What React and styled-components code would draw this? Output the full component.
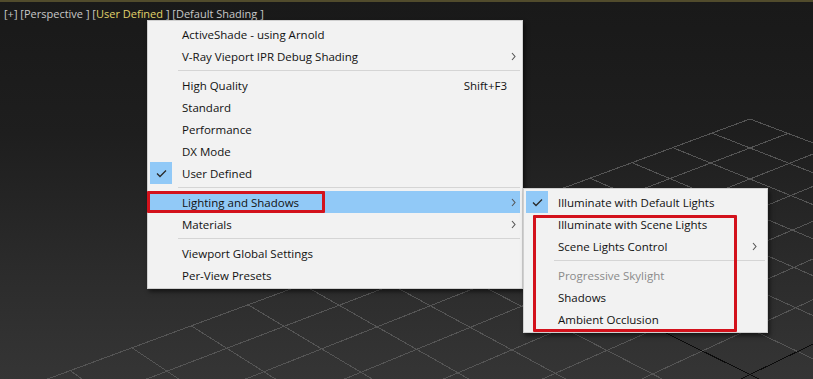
import React from 'react';
import styled, { createGlobalStyle } from 'styled-components';

const GlobalStyle = createGlobalStyle`
  html, body {
    margin: 0;
    padding: 0;
    background: #1a1a1a;
  }
  body {
    font-family: "Open Sans", "Noto Sans", sans-serif;
  }
`;

// perspective of the home grid: two vanishing points and the far corner
const VA = [3022, -724];
const VB = [-1469, -724];
const P0 = [750, 117];
const AL = -0.01645;
const BE = -0.01684;
const N = 30;
const W_MIN = 0.5;
const VIEW_W = 813;
const VIEW_H = 377;

function project(u, v) {
  const a = AL * u;
  const b = BE * v;
  const w = 1 + a + b;
  return [(VA[0] * a + VB[0] * b + P0[0]) / w, (VA[1] * a + VB[1] * b + P0[1]) / w];
}

// keep each line inside the view so it never carries far-off points
function clip(p, q) {
  const dx = q[0] - p[0];
  const dy = q[1] - p[1];
  let t0 = 0;
  let t1 = 1;
  const checks = [
    [-dx, p[0]],
    [dx, VIEW_W - p[0]],
    [-dy, p[1]],
    [dy, VIEW_H - p[1]],
  ];
  for (const [pk, qk] of checks) {
    if (pk === 0) {
      if (qk < 0) return null;
    } else {
      const r = qk / pk;
      if (pk < 0) {
        if (r > t1) return null;
        if (r > t0) t0 = r;
      } else {
        if (r < t0) return null;
        if (r < t1) t1 = r;
      }
    }
  }
  return [p[0] + t0 * dx, p[1] + t0 * dy, p[0] + t1 * dx, p[1] + t1 * dy].map(n => Math.round(n * 10) / 10);
}

function gridLines() {
  const lines = [];
  for (let i = 0; i <= N; i++) {
    const vEnd = Math.min(N, (W_MIN - 1 - AL * i) / BE);
    if (vEnd > 0) {
      const c = clip(project(i, 0), project(i, vEnd));
      if (c) lines.push({ key: 'u' + i, axis: i === 7, c });
    }
    const uEnd = Math.min(N, (W_MIN - 1 - BE * i) / AL);
    if (uEnd > 0) {
      const c = clip(project(0, i), project(uEnd, i));
      if (c) lines.push({ key: 'v' + i, axis: i === 7, c });
    }
  }
  return lines;
}

const Viewport = styled.div`
  position: relative;
  width: 813px;
  height: 379px;
  overflow: hidden;
  box-sizing: border-box;
  border-top: 2px solid #514b2c;
  background: linear-gradient(#191919 0%, #1e1e1e 35%, #2b2b2b 70%, #353535 100%);
`;

const GridLayer = styled.svg`
  position: absolute;
  left: 0;
  top: 0;
  display: block;
`;

const ViewLabel = styled.div`
  position: relative;
  padding: 4px 0 0 4px;
  font-size: 11px;
  line-height: 16px;
  color: #c8c8c8;
  white-space: pre;
`;

const Accent = styled.span`
  color: #e0d26a;
`;

const Menu = styled.div`
  position: absolute;
  left: ${({ $left }) => $left}px;
  top: ${({ $top }) => $top}px;
  width: ${({ $width }) => $width}px;
  box-sizing: border-box;
  padding: 2px;
  background: #f2f2f2;
  border: 1px solid #cfcfcf;
  box-shadow: 2px 3px 4px rgba(0, 0, 0, 0.5);
  font-size: 11.5px;
  color: #111;
`;

const Row = styled.div`
  display: grid;
  grid-template-columns: 22px 1fr auto ${({ $tail }) => $tail}px;
  align-items: center;
  height: 22px;
  background: ${({ $active }) => $active ? '#91c9f7' : 'transparent'};
  color: ${({ $disabled }) => $disabled ? '#8a8a8a' : '#111'};
`;

const CheckCell = styled.span`
  display: flex;
  align-items: center;
  justify-content: center;
  height: 22px;
  background: ${({ $checked }) => $checked ? '#91c9f7' : 'transparent'};
`;

const Label = styled.span`
  padding-left: 10px;
  white-space: nowrap;
`;

const Shortcut = styled.span`
  white-space: nowrap;
`;

const ArrowCell = styled.span`
  display: flex;
  align-items: center;
  justify-content: center;
`;

const Separator = styled.div`
  padding: 3px 0;
  margin-left: 28px;

  &::after {
    content: '';
    display: block;
    height: 1px;
    background: #d5d5d5;
  }
`;

const RedMark = styled.div`
  position: absolute;
  left: ${({ $left }) => $left}px;
  top: ${({ $top }) => $top}px;
  width: ${({ $width }) => $width}px;
  height: ${({ $height }) => $height}px;
  box-sizing: border-box;
  border: 3px solid #d3121c;
  border-radius: 1px;
`;

const Check = () => (
  <svg width="11" height="9" viewBox="0 0 11 9">
    <polyline points="1,4.5 4,7.5 10,1.5" fill="none" stroke="#2a2a2a" strokeWidth="1.3" />
  </svg>
);

const Chevron = () => (
  <svg width="5" height="9" viewBox="0 0 5 9">
    <polyline points="1,1 4,4.5 1,8" fill="none" stroke="#555" strokeWidth="1.1" />
  </svg>
);

const mainItems = [
  { label: 'ActiveShade - using Arnold' },
  { label: 'V-Ray Vieport IPR Debug Shading', sub: true },
  { sep: true },
  { label: 'High Quality', shortcut: 'Shift+F3' },
  { label: 'Standard' },
  { label: 'Performance' },
  { label: 'DX Mode' },
  { label: 'User Defined', checked: true },
  { sep: true },
  { label: 'Lighting and Shadows', sub: true, active: true },
  { label: 'Materials', sub: true },
  { sep: true },
  { label: 'Viewport Global Settings' },
  { label: 'Per-View Presets' },
];

const lightItems = [
  { label: 'Illuminate with Default Lights', checked: true },
  { label: 'Illuminate with Scene Lights' },
  { label: 'Scene Lights Control', sub: true },
  { sep: true },
  { label: 'Progressive Skylight', disabled: true },
  { label: 'Shadows' },
  { label: 'Ambient Occlusion' },
];

const MenuRows = ({ items, tail }) => items.map((item, i) => (
  item.sep
    ? <Separator key={i} />
    : (
      <Row key={i} $tail={tail} $active={item.active} $disabled={item.disabled}>
        <CheckCell $checked={item.checked}>{item.checked && <Check />}</CheckCell>
        <Label>{item.label}</Label>
        <Shortcut>{item.shortcut}</Shortcut>
        <ArrowCell>{item.sub && <Chevron />}</ArrowCell>
      </Row>
    )
));

const App = () => {
  const lines = gridLines();

  return (
    <>
      <GlobalStyle />
      <Viewport>
        <GridLayer width={VIEW_W} height={VIEW_H} viewBox={`0 0 ${VIEW_W} ${VIEW_H}`} shapeRendering="crispEdges">
          {lines.map(({ key, axis, c }) => (
            <line
              key={key}
              x1={c[0]}
              y1={c[1]}
              x2={c[2]}
              y2={c[3]}
              stroke={axis ? '#0c0c0c' : '#555555'}
              strokeWidth="1"
            />
          ))}
        </GridLayer>

        <ViewLabel>
          [+] [Perspective ] [<Accent>User Defined</Accent> ] [Default Shading ]
        </ViewLabel>

        <Menu $left={147} $top={18} $width={376}>
          <MenuRows items={mainItems} tail={13} />
          <RedMark $left={-1} $top={170} $width={178} $height={22} />
        </Menu>

        <Menu $left={523} $top={186} $width={245}>
          <MenuRows items={lightItems} tail={22} />
          <RedMark $left={9} $top={26} $width={204} $height={117} />
        </Menu>
      </Viewport>
    </>
  );
};

export default App;
